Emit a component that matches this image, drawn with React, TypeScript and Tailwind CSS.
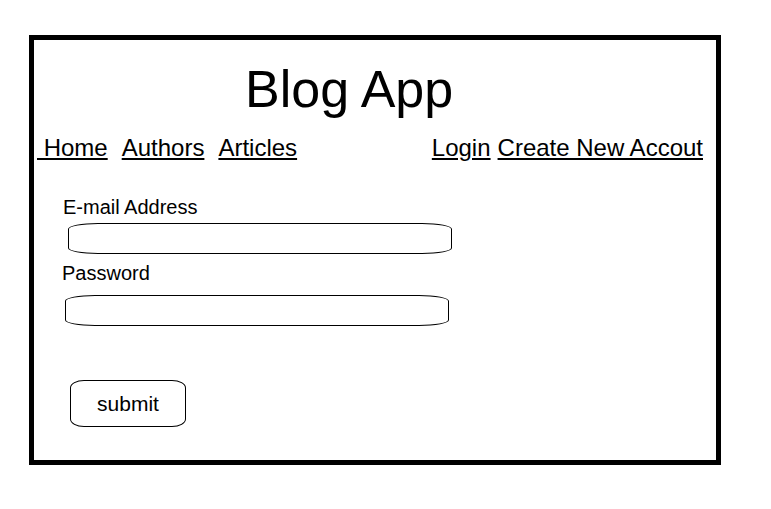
import React from "react"

const font = "font-['Liberation_Sans',Arial,sans-serif]"

export default function App() {
  return (
    <div className={`w-[771px] h-[509px] bg-white text-black overflow-hidden pt-[35px] pl-[29px] ${font}`}>
      <div className="w-[692px] h-[430px] border-[5px] border-black flex flex-col items-start">
        <h1 className="mt-[23px] ml-[211px] text-[52px] leading-none font-normal">Blog App</h1>

        <nav className="mt-[21px] w-full flex justify-between pl-[3px] pr-[13px] text-[24px] leading-none">
          <div className="flex gap-[14px]">
            <a href="#" className="underline">{"\u00a0Home"}</a>
            <a href="#" className="underline">Authors</a>
            <a href="#" className="underline">Articles</a>
          </div>
          <div className="flex gap-[7px]">
            <a href="#" className="underline">Login</a>
            <a href="#" className="underline">Create New Accout</a>
          </div>
        </nav>

        <label className="mt-[37px] ml-[29px] text-[20px] leading-none">E-mail Address</label>
        <input
          type="email"
          className="mt-[6px] ml-[34px] w-[384px] h-[31px] border border-black rounded-[30px_/_6px] outline-none px-3"
        />

        <label className="mt-[9px] ml-[28px] text-[20px] leading-none">Password</label>
        <input
          type="password"
          className="mt-[12px] ml-[31px] w-[384px] h-[31px] border border-black rounded-[30px_/_6px] outline-none px-3"
        />

        <button className="mt-[54px] ml-[36px] w-[116px] h-[47px] border border-black rounded-[14px_/_8px] text-[21px] leading-none bg-white">
          submit
        </button>
      </div>
    </div>
  )
}
